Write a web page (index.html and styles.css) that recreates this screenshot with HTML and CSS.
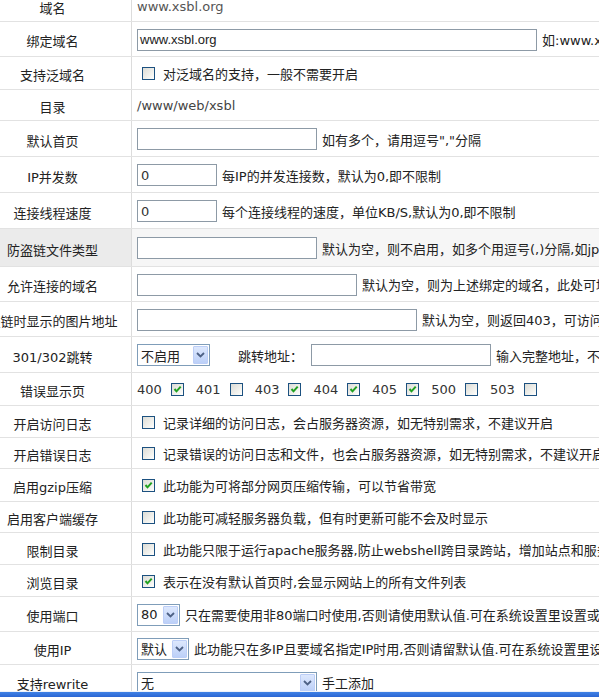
FILE: index.html
```html
<!DOCTYPE html>
<html lang="zh-CN">
<head>
<meta charset="utf-8">
<title>站点设置</title>
<link rel="stylesheet" href="styles.css">
</head>
<body>
<div class="table">
  <div class="row h32"><div class="lab"><span>域名</span></div><div class="val"><span class="gray">www.xsbl.org</span></div></div>
  <div class="row h35"><div class="lab"><span>绑定域名</span></div><div class="val"><span class="inp w400 arial">www.xsbl.org</span><span>如:www.xsbl.org</span></div></div>
  <div class="row h33"><div class="lab"><span>支持泛域名</span></div><div class="val"><span class="cb"></span><span>对泛域名的支持，一般不需要开启</span></div></div>
  <div class="row h31"><div class="lab"><span>目录</span></div><div class="val"><span class="dark">/www/web/xsbl</span></div></div>
  <div class="row h36"><div class="lab"><span>默认首页</span></div><div class="val"><span class="inp w180"></span><span>如有多个，请用逗号","分隔</span></div></div>
  <div class="row h36"><div class="lab"><span>IP并发数</span></div><div class="val"><span class="inp w80">0</span><span>每IP的并发连接数，默认为0,即不限制</span></div></div>
  <div class="row h36"><div class="lab"><span>连接线程速度</span></div><div class="val"><span class="inp w80">0</span><span>每个连接线程的速度，单位KB/S,默认为0,即不限制</span></div></div>
  <div class="row h38 hl"><div class="lab"><span>防盗链文件类型</span></div><div class="val"><span class="inp w180"></span><span>默认为空，则不启用，如多个用逗号(,)分隔,如jpg,gif,png</span></div></div>
  <div class="row h35"><div class="lab"><span>允许连接的域名</span></div><div class="val"><span class="inp w220"></span><span>默认为空，则为上述绑定的域名，此处可填写多个</span></div></div>
  <div class="row h35"><div class="lab"><span>盗链时显示的图片地址</span></div><div class="val"><span class="inp w280"></span><span>默认为空，则返回403，可访问的图片地址</span></div></div>
  <div class="row h36"><div class="lab"><span>301/302跳转</span></div><div class="val">
    <span class="sel w73"><span class="seltxt">不启用</span><span class="btn"><svg width="9" height="6" viewBox="0 0 9 6"><path d="M1 1 L4.5 4.5 L8 1" fill="none" stroke="#4d6185" stroke-width="1.8"/></svg></span></span>
    <span class="jump">跳转地址：</span><span class="inp w179"></span><span>输入完整地址，不带http://</span></div></div>
  <div class="row h33"><div class="lab"><span>错误显示页</span></div><div class="val">
    <span class="num">400</span><span class="cb on sm"><svg width="11" height="11" viewBox="0 0 11 11"><path d="M2.5 5 L4.5 7.3 L8.7 2.6" fill="none" stroke="#21a121" stroke-width="2"/></svg></span>
    <span class="num">401</span><span class="cb sm"></span>
    <span class="num">403</span><span class="cb on sm"><svg width="11" height="11" viewBox="0 0 11 11"><path d="M2.5 5 L4.5 7.3 L8.7 2.6" fill="none" stroke="#21a121" stroke-width="2"/></svg></span>
    <span class="num">404</span><span class="cb on sm"><svg width="11" height="11" viewBox="0 0 11 11"><path d="M2.5 5 L4.5 7.3 L8.7 2.6" fill="none" stroke="#21a121" stroke-width="2"/></svg></span>
    <span class="num">405</span><span class="cb on sm"><svg width="11" height="11" viewBox="0 0 11 11"><path d="M2.5 5 L4.5 7.3 L8.7 2.6" fill="none" stroke="#21a121" stroke-width="2"/></svg></span>
    <span class="num">500</span><span class="cb sm"></span>
    <span class="num">503</span><span class="cb sm"></span>
  </div></div>
  <div class="row h32"><div class="lab"><span>开启访问日志</span></div><div class="val"><span class="cb"></span><span>记录详细的访问日志，会占服务器资源，如无特别需求，不建议开启</span></div></div>
  <div class="row h31"><div class="lab"><span>开启错误日志</span></div><div class="val"><span class="cb"></span><span>记录错误的访问日志和文件，也会占服务器资源，如无特别需求，不建议开启</span></div></div>
  <div class="row h33"><div class="lab"><span>启用gzip压缩</span></div><div class="val"><span class="cb on"><svg width="11" height="11" viewBox="0 0 11 11"><path d="M2.5 5 L4.5 7.3 L8.7 2.6" fill="none" stroke="#21a121" stroke-width="2"/></svg></span><span>此功能为可将部分网页压缩传输，可以节省带宽</span></div></div>
  <div class="row h31"><div class="lab"><span>启用客户端缓存</span></div><div class="val"><span class="cb"></span><span>此功能可减轻服务器负载，但有时更新可能不会及时显示</span></div></div>
  <div class="row h32"><div class="lab"><span>限制目录</span></div><div class="val"><span class="cb"></span><span>此功能只限于运行apache服务器,防止webshell跨目录跨站，增加站点和服务器安全</span></div></div>
  <div class="row h32"><div class="lab"><span>浏览目录</span></div><div class="val"><span class="cb on"><svg width="11" height="11" viewBox="0 0 11 11"><path d="M2.5 5 L4.5 7.3 L8.7 2.6" fill="none" stroke="#21a121" stroke-width="2"/></svg></span><span>表示在没有默认首页时,会显示网站上的所有文件列表</span></div></div>
  <div class="row h35"><div class="lab"><span>使用端口</span></div><div class="val">
    <span class="sel w43"><span class="seltxt">80</span><span class="btn"><svg width="9" height="6" viewBox="0 0 9 6"><path d="M1 1 L4.5 4.5 L8 1" fill="none" stroke="#4d6185" stroke-width="1.8"/></svg></span></span>
    <span>只在需要使用非80端口时使用,否则请使用默认值.可在系统设置里设置或修改</span></div></div>
  <div class="row h33"><div class="lab"><span>使用IP</span></div><div class="val">
    <span class="sel w52"><span class="seltxt">默认</span><span class="btn"><svg width="9" height="6" viewBox="0 0 9 6"><path d="M1 1 L4.5 4.5 L8 1" fill="none" stroke="#4d6185" stroke-width="1.8"/></svg></span></span>
    <span>此功能只在多IP且要域名指定IP时用,否则请留默认值.可在系统设置里设置</span></div></div>
  <div class="row h35"><div class="lab"><span>支持rewrite</span></div><div class="val">
    <span class="sel w180"><span class="seltxt">无</span><span class="btn"><svg width="9" height="6" viewBox="0 0 9 6"><path d="M1 1 L4.5 4.5 L8 1" fill="none" stroke="#4d6185" stroke-width="1.8"/></svg></span></span>
    <span>手工添加</span></div></div>
</div>
<div class="taskbar"></div>
</body>
</html>
```
FILE: styles.css
```css
html, body {
  margin: 0;
  padding: 0;
  background: #fff;
  overflow: hidden;
}
body {
  font-family: "DejaVu Sans", "Noto Sans CJK SC", sans-serif;
  font-size: 13px;
  color: #222;
  width: 599px;
  height: 697px;
}
.table {
  margin-top: -10px;
  width: 599px;
  overflow: hidden;
}
.row {
  display: flex;
  box-sizing: border-box;
  border-bottom: 1px solid #e2e2e2;
  white-space: nowrap;
}
.h31 { height: 31px; }
.h32 { height: 32px; }
.h33 { height: 33px; }
.h35 { height: 35px; }
.h36 { height: 36px; }
.h38 { height: 38px; }
.lab {
  flex: 0 0 132px;
  width: 132px;
  min-width: 0;
  box-sizing: border-box;
  border-right: 1px solid #dcdcdc;
  padding-right: 26px;
  padding-top: 3px;
  display: flex;
  align-items: center;
  justify-content: center;
  white-space: nowrap;
}
.lab span { flex: none; }
.val {
  flex: 1;
  min-width: 0;
  padding-left: 5px;
  padding-top: 1px;
  display: flex;
  align-items: center;
  overflow: hidden;
  white-space: nowrap;
}
.hl .lab { background: #ebebeb; }
.hl .val { background: #f6f6f6; }
.gray { color: #555; }
.dark { color: #444; }
.inp {
  box-sizing: border-box;
  height: 22px;
  border: 1px solid #8d9aa6;
  background: #fff;
  margin-right: 5px;
  padding-left: 3px;
  display: inline-flex;
  align-items: center;
  flex: none;
  color: #333;
  font-family: "DejaVu Sans", sans-serif;
  font-size: 13px;
}
.arial { font-family: "Liberation Sans", Arial, sans-serif; color: #222; padding-left: 2px; }
.w400 { width: 400px; }
.w180 { width: 180px; }
.w179 { width: 180px; }
.w80 { width: 80px; }
.w220 { width: 220px; }
.w280 { width: 280px; }
.w73 { width: 73px; }
.w43 { width: 43px; }
.w52 { width: 52px; }
.cb {
  flex: none;
  box-sizing: border-box;
  width: 13px;
  height: 13px;
  border: 1px solid #1c5180;
  background: linear-gradient(135deg, #dcdcd6 0%, #f4f4f0 70%, #ffffff 100%);
  margin-left: 5px;
  margin-right: 8px;
  display: inline-flex;
  align-items: center;
  justify-content: center;
}
.cb.sm {
  margin-left: 9px;
  margin-right: 12px;
}
.cb svg { display: block; }
.num {
  color: #333;
  flex: none;
}
.sel {
  flex: none;
  box-sizing: border-box;
  height: 22px;
  border: 1px solid #7f9db9;
  background: #fff;
  display: inline-flex;
  align-items: stretch;
  margin-right: 5px;
  padding: 1px;
}
.seltxt {
  flex: 1;
  padding-left: 2px;
  display: flex;
  align-items: center;
  color: #222;
}
.btn {
  flex: 0 0 15px;
  box-sizing: border-box;
  border: 1px solid #bccef7;
  border-radius: 1px;
  background: linear-gradient(#dde8fd, #bcd0f8);
  display: flex;
  align-items: center;
  justify-content: center;
}
.jump {
  margin-left: 23px;
  margin-right: 8px;
}
.taskbar {
  position: fixed;
  left: 0;
  right: 0;
  bottom: 0;
  height: 5px;
  border-top: 1px solid #eef2fa;
  background: linear-gradient(#3f82e6, #2c66d3);
}
```
